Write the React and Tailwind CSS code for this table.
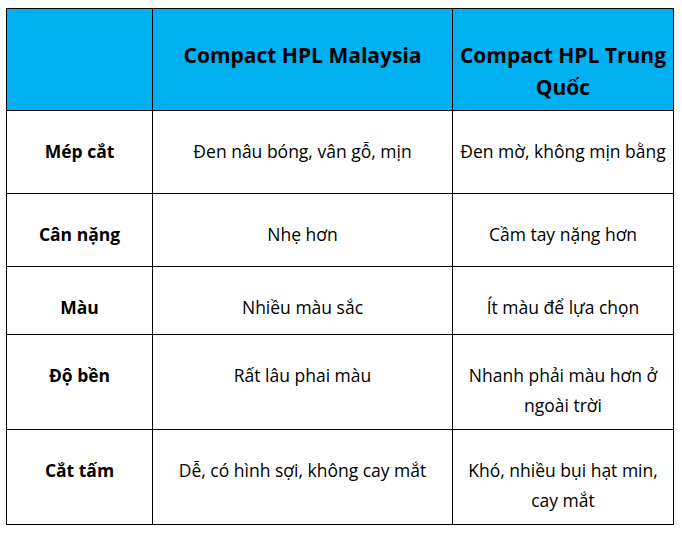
import React from "react";

const rows = [
  { label: "Mép cắt", my: "Đen nâu bóng, vân gỗ, mịn", cn: ["Đen mờ, không mịn bằng"] },
  { label: "Cân nặng", my: "Nhẹ hơn", cn: ["Cầm tay nặng hơn"] },
  { label: "Màu", my: "Nhiều màu sắc", cn: ["Ít màu để lựa chọn"] },
  { label: "Độ bền", my: "Rất lâu phai màu", cn: ["Nhanh phải màu hơn ở", "ngoài trời"] },
  { label: "Cắt tấm", my: "Dễ, có hình sợi, không cay mắt", cn: ["Khó, nhiều bụi hạt min,", "cay mắt"] },
];

const App = () => {
  return (
    <div className="min-h-[534px] w-[682px] bg-white pt-[8px] pl-[6px]" style={{ fontFamily: "'Open Sans', 'Noto Sans', sans-serif" }}>
      <div className="grid w-[668px] grid-cols-[146px_300px_221px] grid-rows-[102px_83px_73px_68px_95px_95px] border-l border-t border-black text-black">
        <div className="border-r border-b border-black bg-[#00b0f0]" />
        <div className="border-r border-b border-black bg-[#00b0f0] pt-[30px] text-center text-[21px] font-bold leading-[32px]">
          Compact HPL Malaysia
        </div>
        <div className="border-r border-b border-black bg-[#00b0f0] pt-[30px] text-center text-[21px] font-bold leading-[32px]">
          Compact HPL Trung
          <br />
          Quốc
        </div>

        {rows.map((r) => (
          <React.Fragment key={r.label}>
            <div className="border-r border-b border-black pt-[25px] text-center text-[17.5px] font-bold leading-[30px]">
              {r.label}
            </div>
            <div className="border-r border-b border-black pt-[25px] text-center text-[17.5px] leading-[30px]">
              {r.my}
            </div>
            <div className="border-r border-b border-black pt-[25px] text-center text-[17.5px] leading-[30px]">
              {r.cn.map((line, i) => (
                <div key={i}>{line}</div>
              ))}
            </div>
          </React.Fragment>
        ))}
      </div>
    </div>
  );
};

export default App;
